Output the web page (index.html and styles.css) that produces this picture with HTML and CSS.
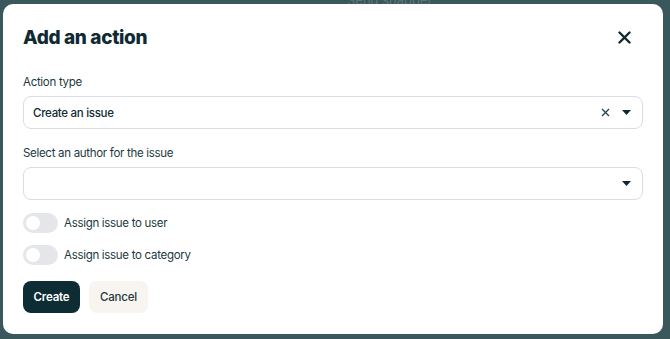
FILE: index.html
```html
<!DOCTYPE html>
<html>
<head>
<meta charset="utf-8">
<link rel="stylesheet" href="styles.css">
</head>
<body>
<div class="backdrop">
  <div class="bg-text">Send snapper</div>
  <div class="modal">
    <div class="header">
      <h2 class="title">Add an action</h2>
      <button class="close" aria-label="Close">
        <svg width="13" height="13" viewBox="0 0 13 13"><path d="M1.5 1.5L11.5 11.5M11.5 1.5L1.5 11.5" stroke="#0f2a33" stroke-width="2.4" stroke-linecap="round"/></svg>
      </button>
    </div>
    <div class="field first">
      <div class="label">Action type</div>
      <div class="select">
        <span class="value">Create an issue</span>
        <span class="icons">
          <svg class="clear" width="9" height="9" viewBox="0 0 9 9"><path d="M1 1L8 8M8 1L1 8" stroke="#1d4a55" stroke-width="1.4"/></svg>
          <svg class="caret" width="9" height="5" viewBox="0 0 9 5"><path d="M0 0H9L4.5 5Z" fill="#0f2a33"/></svg>
        </span>
      </div>
    </div>
    <div class="field">
      <div class="label">Select an author for the issue</div>
      <div class="select">
        <span class="value"></span>
        <span class="icons">
          <svg class="caret" width="9" height="5" viewBox="0 0 9 5"><path d="M0 0H9L4.5 5Z" fill="#0f2a33"/></svg>
        </span>
      </div>
    </div>
    <div class="toggles">
      <label class="toggle-row"><span class="toggle"><span class="knob"></span></span>Assign issue to user</label>
      <label class="toggle-row"><span class="toggle"><span class="knob"></span></span>Assign issue to category</label>
    </div>
    <div class="actions">
      <button class="btn primary">Create</button>
      <button class="btn secondary">Cancel</button>
    </div>
  </div>
</div>
</body>
</html>
```
FILE: styles.css
```css
* { box-sizing: border-box; }
html, body { margin: 0; padding: 0; }
body {
  font-family: Inter, "Noto Sans", sans-serif;
  color: #1c3840;
  background: #3a575c;
}
.backdrop {
  position: relative;
  width: 670px;
  height: 339px;
  background: #3a575c;
  padding: 4px 7px 5px 3px;
  overflow: hidden;
}
.bg-text {
  position: absolute;
  left: 347px;
  top: -8px;
  font-size: 13px;
  color: #5c767b;
}
.modal {
  position: relative;
  background: #fff;
  border-radius: 10px;
  height: 330px;
  padding: 20px 20px 0 20px;
}
.header {
  display: flex;
  justify-content: space-between;
  align-items: center;
  height: 26px;
}
.title {
  margin: 0;
  font-size: 19px;
  font-weight: 800;
  color: #0f2a33;
  letter-spacing: -0.35px;
}
.close {
  border: 0;
  background: none;
  padding: 0;
  margin-right: 12px;
  width: 13px;
  height: 13px;
  display: flex;
}
.field { margin-top: 16px; }
.field.first { margin-top: 24px; }
.label {
  font-size: 11.5px;
  letter-spacing: -0.3px;
  color: #1c3840;
  line-height: 16px;
  margin-bottom: 6px;
}
.select {
  height: 33px;
  border: 1px solid #dcdde3;
  border-radius: 8px;
  display: flex;
  align-items: center;
  justify-content: space-between;
  padding: 0 11px 0 9px;
}
.value {
  font-size: 11.5px;
  letter-spacing: -0.3px;
  font-weight: 500;
  color: #0f2a33;
}
.icons {
  display: flex;
  align-items: center;
  gap: 12px;
}
.toggles {
  margin-top: 13px;
  display: flex;
  flex-direction: column;
  gap: 12px;
}
.toggle-row {
  display: flex;
  align-items: center;
  gap: 6px;
  font-size: 11.5px;
  letter-spacing: -0.3px;
  color: #1c3840;
}
.toggle {
  width: 35px;
  height: 20px;
  border-radius: 10px;
  background: #e5e6ea;
  display: flex;
  align-items: center;
  padding-left: 3px;
}
.knob {
  width: 14px;
  height: 14px;
  border-radius: 50%;
  background: #fff;
}
.actions {
  margin-top: 16px;
  display: flex;
  gap: 9px;
}
.btn {
  height: 32px;
  border: 0;
  border-radius: 8px;
  font-family: inherit;
  font-size: 11.5px;
  letter-spacing: -0.2px;
  font-weight: 600;
  padding: 0;
}
.primary {
  background: #0e2c34;
  color: #fff;
  width: 57px;
}
.secondary {
  background: #f8f4ef;
  color: #1c3840;
  width: 59px;
  font-weight: 500;
}
```
